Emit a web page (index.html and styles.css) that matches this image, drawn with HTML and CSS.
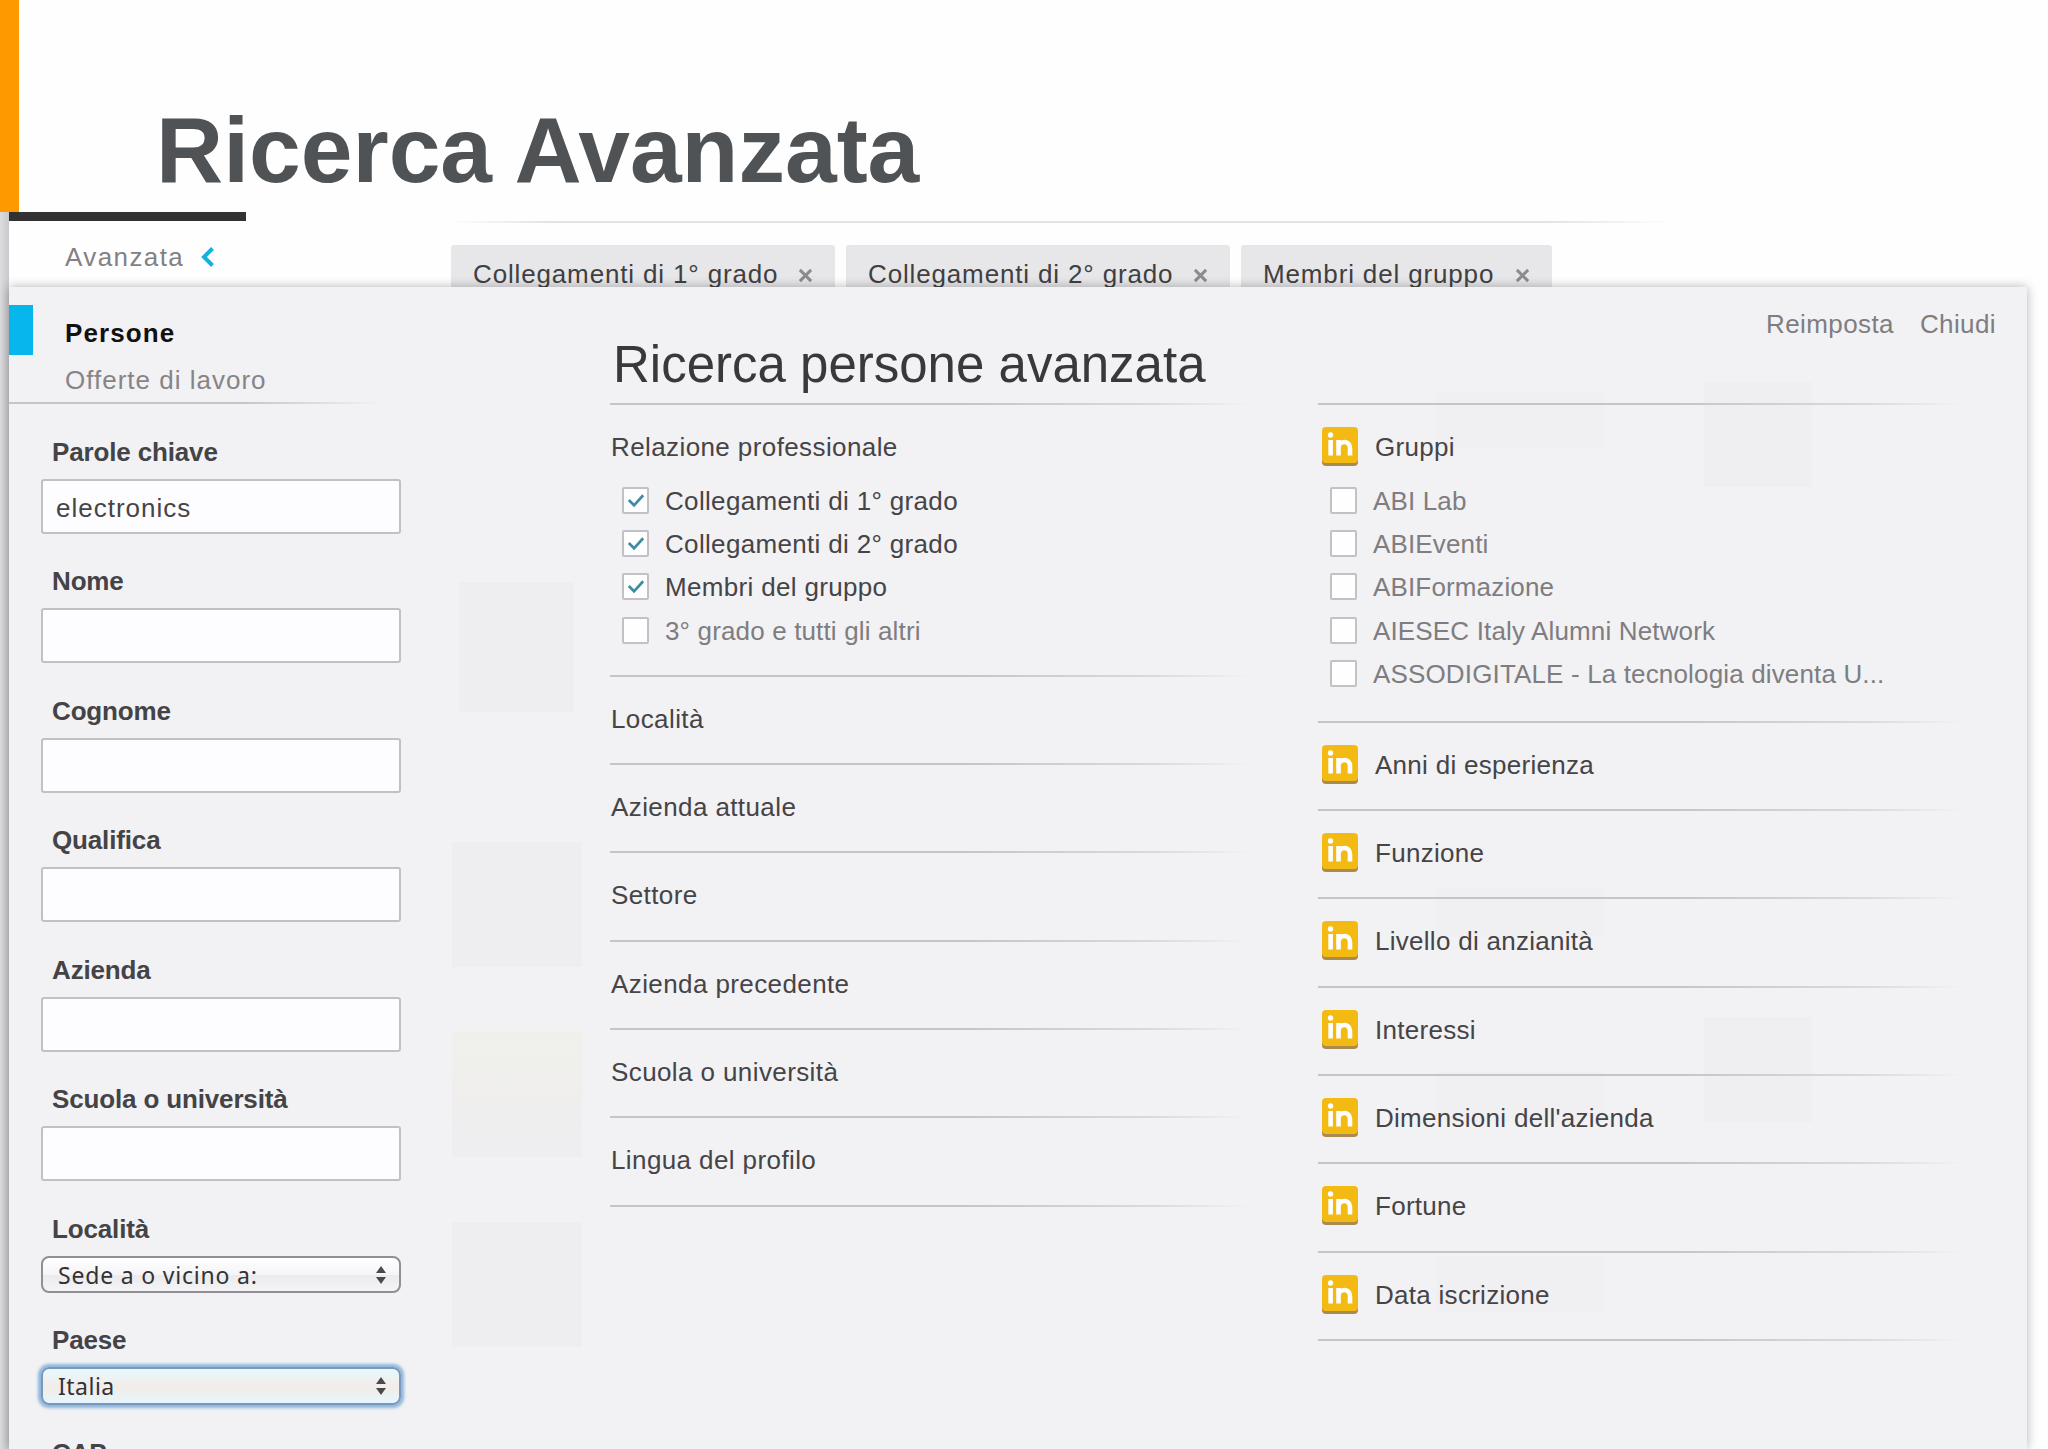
FILE: index.html
```html
<!DOCTYPE html>
<html lang="it">
<head>
    <meta charset="UTF-8">
    <meta name="viewport" content="width=device-width, initial-scale=1.0">
    <title>Ricerca Avanzata</title>
    <link rel="stylesheet" href="styles.css">
</head>
<body>
    <svg width="0" height="0" class="defs">
        <symbol id="tick" viewBox="0 0 24 24">
            <path d="M5 11.5l5.5 5.5L20 6.5" fill="none" stroke="#3f8ba3" stroke-width="2.8"/>
        </symbol>
        <symbol id="close" viewBox="0 0 16 16">
            <path d="M2 2l12 12M14 2L2 14" fill="none" stroke="#8c8b8e" stroke-width="3.2"/>
        </symbol>
        <symbol id="arrows" viewBox="0 0 10 18">
            <path d="M0 7l5-7 5 7zM0 11l5 7 5-7z" fill="#4c494c"/>
        </symbol>
        <symbol id="badge" viewBox="0 0 36 39">
            <rect y="3" width="36" height="36" rx="4" fill="#ab8a4f"/>
            <rect width="36" height="36" rx="4" fill="#f3ba14"/>
            <circle cx="8.5" cy="8" r="2.7" fill="#fff"/>
            <rect x="6.3" y="13" width="4.6" height="15.5" fill="#fff"/>
            <path d="M16.5 28.5V13M16.5 21c0-7.500 11.500-8.500 11.500 0v7.500" fill="none" stroke="#fff" stroke-width="4.600"/>
        </symbol>
    </svg>

    <header class="slide-header">
        <h1>Ricerca Avanzata</h1>
    </header>

    <div class="window">
        <div class="topbar">
            <div class="nav">
                <span>Avanzata</span>
                <svg class="chevron" viewBox="0 0 14 20"><path d="M11.500 1.500L3 10l8.500 8.500" fill="none" stroke="#14b1dc" stroke-width="4"/></svg>
            </div>
            <div class="tabs">
                <div class="tab tab-first">Collegamenti di 1° grado <svg><use href="#close"/></svg></div>
                <div class="tab tab-second">Collegamenti di 2° grado <svg><use href="#close"/></svg></div>
                <div class="tab tab-third">Membri del gruppo <svg><use href="#close"/></svg></div>
            </div>
        </div>

        <main class="panel">
            <aside class="sidebar">
                <div class="menu">
                    <div class="menu-item active">Persone</div>
                    <div class="menu-item">Offerte di lavoro</div>
                </div>
                <form class="fields">
                    <div class="field"><label>Parole chiave</label><div class="input">electronics</div></div>
                    <div class="field"><label>Nome</label><div class="input"></div></div>
                    <div class="field"><label>Cognome</label><div class="input"></div></div>
                    <div class="field"><label>Qualifica</label><div class="input"></div></div>
                    <div class="field"><label>Azienda</label><div class="input"></div></div>
                    <div class="field"><label>Scuola o università</label><div class="input"></div></div>
                    <div class="field"><label>Località</label><div class="select">Sede a o vicino a: <svg><use href="#arrows"/></svg></div></div>
                    <div class="field"><label>Paese</label><div class="select focus">Italia <svg><use href="#arrows"/></svg></div></div>
                    <div class="field"><label>CAP</label></div>
                </form>
            </aside>

            <section class="column middle">
                <h2>Ricerca persone avanzata</h2>
                <div class="facet open">
                    <h3>Relazione professionale</h3>
                    <ul>
                        <li class="checked"><span class="box"><svg><use href="#tick"/></svg></span>Collegamenti di 1° grado</li>
                        <li class="checked"><span class="box"><svg><use href="#tick"/></svg></span>Collegamenti di 2° grado</li>
                        <li class="checked"><span class="box"><svg><use href="#tick"/></svg></span>Membri del gruppo</li>
                        <li><span class="box"></span>3° grado e tutti gli altri</li>
                    </ul>
                </div>
                <div class="facet"><h3>Località</h3></div>
                <div class="facet"><h3>Azienda attuale</h3></div>
                <div class="facet"><h3>Settore</h3></div>
                <div class="facet"><h3>Azienda precedente</h3></div>
                <div class="facet"><h3>Scuola o università</h3></div>
                <div class="facet"><h3>Lingua del profilo</h3></div>
            </section>

            <section class="column right">
                <div class="actions"><span>Reimposta</span><span>Chiudi</span></div>
                <div class="facet open">
                    <h3><svg><use href="#badge"/></svg>Gruppi</h3>
                    <ul>
                        <li><span class="box"></span>ABI Lab</li>
                        <li><span class="box"></span>ABIEventi</li>
                        <li><span class="box"></span>ABIFormazione</li>
                        <li><span class="box"></span>AIESEC Italy Alumni Network</li>
                        <li><span class="box"></span>ASSODIGITALE - La tecnologia diventa U...</li>
                    </ul>
                </div>
                <div class="facet"><h3><svg><use href="#badge"/></svg>Anni di esperienza</h3></div>
                <div class="facet"><h3><svg><use href="#badge"/></svg>Funzione</h3></div>
                <div class="facet"><h3><svg><use href="#badge"/></svg>Livello di anzianità</h3></div>
                <div class="facet"><h3><svg><use href="#badge"/></svg>Interessi</h3></div>
                <div class="facet"><h3><svg><use href="#badge"/></svg>Dimensioni dell'azienda</h3></div>
                <div class="facet"><h3><svg><use href="#badge"/></svg>Fortune</h3></div>
                <div class="facet"><h3><svg><use href="#badge"/></svg>Data iscrizione</h3></div>
            </section>
        </main>
    </div>
</body>
</html>
```
FILE: styles.css
```css
* {
    box-sizing: border-box;
}

body {
    margin: 0;
    width: 2048px;
    height: 1449px;
    overflow: hidden;
    background-color: #fefefe;
    font-family: "Liberation Sans", Arial, sans-serif;
    font-size: 26px;
    line-height: 30px;
    color: #454447;
}

.defs {
    display: block;
}

.slide-header {
    height: 212px;
    border-left: 19px solid #ff9900;
    padding: 97px 0 0 137px;
}

h1 {
    margin: 0;
    font-size: 93px;
    line-height: 106px;
    color: #505356;
}

.window {
    height: 1237px;
    padding-left: 9px;
    background: linear-gradient(to right, #dddcdf, #c9c8cb 9px, transparent 9px);
    overflow: hidden;
}

.topbar {
    display: flex;
    height: 75px;
}

.nav {
    width: 237px;
    margin-right: 205px;
    border-top: 9px solid #333233;
    padding: 21px 0 0 56px;
    color: #828184;
    letter-spacing: 1.4px;
    display: flex;
    gap: 17px;
}

.chevron {
    width: 14px;
    height: 20px;
    margin-top: 5px;
}

.tabs {
    display: flex;
    gap: 11px;
    width: 1220px;
    margin-top: 9px;
    background: linear-gradient(to right, transparent, #e3e2e5 8%, #e3e2e5 90%, transparent) top / 100% 2px no-repeat;
    padding-top: 24px;
}

.tab {
    display: flex;
    justify-content: space-between;
    padding: 14px 22px 0 22px;
    background-color: #e7e6e8;
    border-radius: 3px 3px 0 0;
    white-space: nowrap;
    color: #403f42;
    letter-spacing: 0.85px;
}

.tab svg {
    width: 15px;
    height: 15px;
    margin-top: 9px;
}

.tab-first {
    width: 384px;
}

.tab-second {
    width: 384px;
}

.tab-third {
    width: 311px;
}

.panel {
    position: relative;
    display: flex;
    width: 2018px;
    height: 1162px;
    background-color: #f2f1f4;
    background-image:
        linear-gradient(#eeedf0, #eeedf0),
        linear-gradient(#eeedf0, #eeedf0),
        linear-gradient(#f0f0eb, #eeedf0),
        linear-gradient(#eeedf0, #eeedf0),
        linear-gradient(#f0eff2, #f0eff2),
        linear-gradient(#f0eff2, #f0eff2),
        linear-gradient(#f0eff2, #f0eff2),
        linear-gradient(#f0eff2, #f0eff2),
        linear-gradient(#efeef1, #efeef1),
        linear-gradient(#efeef1, #efeef1);
    background-position:
        450px 295px, 443px 555px, 443px 745px, 443px 935px,
        1427px 105px, 1427px 600px, 1427px 785px, 1427px 970px,
        1695px 95px, 1695px 730px;
    background-size:
        115px 130px, 130px 125px, 130px 125px, 130px 125px,
        168px 55px, 168px 50px, 168px 50px, 168px 55px,
        108px 105px, 108px 105px;
    background-repeat: no-repeat;
    box-shadow: 0 0 10px rgba(0, 0, 0, 0.3);
}

.sidebar {
    width: 392px;
}

.menu {
    height: 117px;
    padding-top: 18px;
    background: linear-gradient(to right, #c6c5c8 60%, transparent 95%) bottom / 100% 2px no-repeat;
}

.menu-item {
    padding-left: 56px;
    color: #858487;
    letter-spacing: 1px;
}

.menu-item.active {
    height: 50px;
    margin-bottom: -4px;
    padding: 13px 0 0 32px;
    border-left: 24px solid #06b6ec;
    font-weight: bold;
    color: #111;
    letter-spacing: 1.1px;
}

.menu-item:last-child {
    padding-top: 14px;
}

.fields {
    padding: 32.5px 0 0 32px;
}

.field {
    margin-bottom: 32.5px;
}

.field label {
    display: block;
    height: 30px;
    margin-bottom: 12px;
    padding-left: 11px;
    font-weight: bold;
    color: #444346;
    letter-spacing: -0.15px;
}

.input {
    height: 55px;
    padding: 12px 13px;
    border: 2px solid #c2c0c4;
    border-radius: 3px;
    background-color: #fdfcfe;
    letter-spacing: 1px;
}

.select {
    display: flex;
    justify-content: space-between;
    height: 37px;
    padding: 2px 13px 0 15px;
    border: 2px solid #918f93;
    border-radius: 8px;
    background: linear-gradient(#fff, #f5f4f6 50%, #ebeaec 52%, #f4f3f5);
    font-family: "Noto Sans", sans-serif;
    font-size: 23px;
    color: #333235;
    letter-spacing: 0.8px;
}

.select svg {
    width: 10px;
    height: 18px;
    margin-top: 6px;
}

.select.focus {
    height: 38px;
    border-color: #7998bb;
    background: linear-gradient(#e9f7ff, #f1eee9 50%, #f1eee9 60%, #e6f6ff);
    box-shadow: 0 0 3px 3px #8eb7dc;
    letter-spacing: 0.5px;
}

.middle {
    width: 640px;
    margin-left: 209px;
}

h2 {
    margin: 0;
    height: 116px;
    padding: 49px 0 0 3px;
    font-size: 51px;
    font-weight: normal;
    line-height: 58px;
    color: #39383b;
    white-space: nowrap;
}

.facet {
    height: 88.4px;
    padding-top: 29px;
    background: linear-gradient(to right, #c6c4c9 55%, #dbd9dd 85%, transparent) top left / 100% 2px no-repeat;
}

h3 {
    display: flex;
    margin: 0;
    height: 30px;
    padding-left: 1px;
    font-size: 26px;
    font-weight: normal;
    color: #454447;
    letter-spacing: 0.4px;
}

ul {
    list-style: none;
    margin: 22px 0 0;
    padding: 0 0 0 12px;
}

li {
    display: flex;
    height: 43.2px;
    padding-top: 2px;
    color: #7e7d80;
    white-space: nowrap;
    letter-spacing: 0.15px;
}

li.checked {
    color: #454447;
    letter-spacing: 0.33px;
}

.box {
    width: 27px;
    height: 27px;
    margin: 1px 16px 0 0;
    border: 2px solid #c3c1c5;
    border-radius: 2px;
    background-color: #fefefe;
}

.box svg {
    display: block;
    width: 23px;
    height: 23px;
}

.middle .open {
    height: 271.5px;
}

.middle .facet:last-child,
.right .facet:last-child {
    height: 90.4px;
    background:
        linear-gradient(to right, #c6c4c9 55%, #dbd9dd 85%, transparent) top left / 100% 2px no-repeat,
        linear-gradient(to right, #c6c4c9 55%, #dbd9dd 85%, transparent) bottom left / 100% 2px no-repeat;
}

.right {
    width: 709px;
    margin-left: 68px;
}

.actions {
    display: flex;
    justify-content: flex-end;
    gap: 26px;
    height: 116px;
    padding: 22px 31px 0 0;
    color: #7e7d80;
    letter-spacing: 0.4px;
}

.right .facet {
    width: 645px;
}

.right .open {
    height: 317.5px;
}

.right h3 {
    padding-left: 4px;
    letter-spacing: 0.28px;
}

.right h3 svg {
    width: 36px;
    height: 39px;
    margin: -5px 17px 0 0;
}
```
